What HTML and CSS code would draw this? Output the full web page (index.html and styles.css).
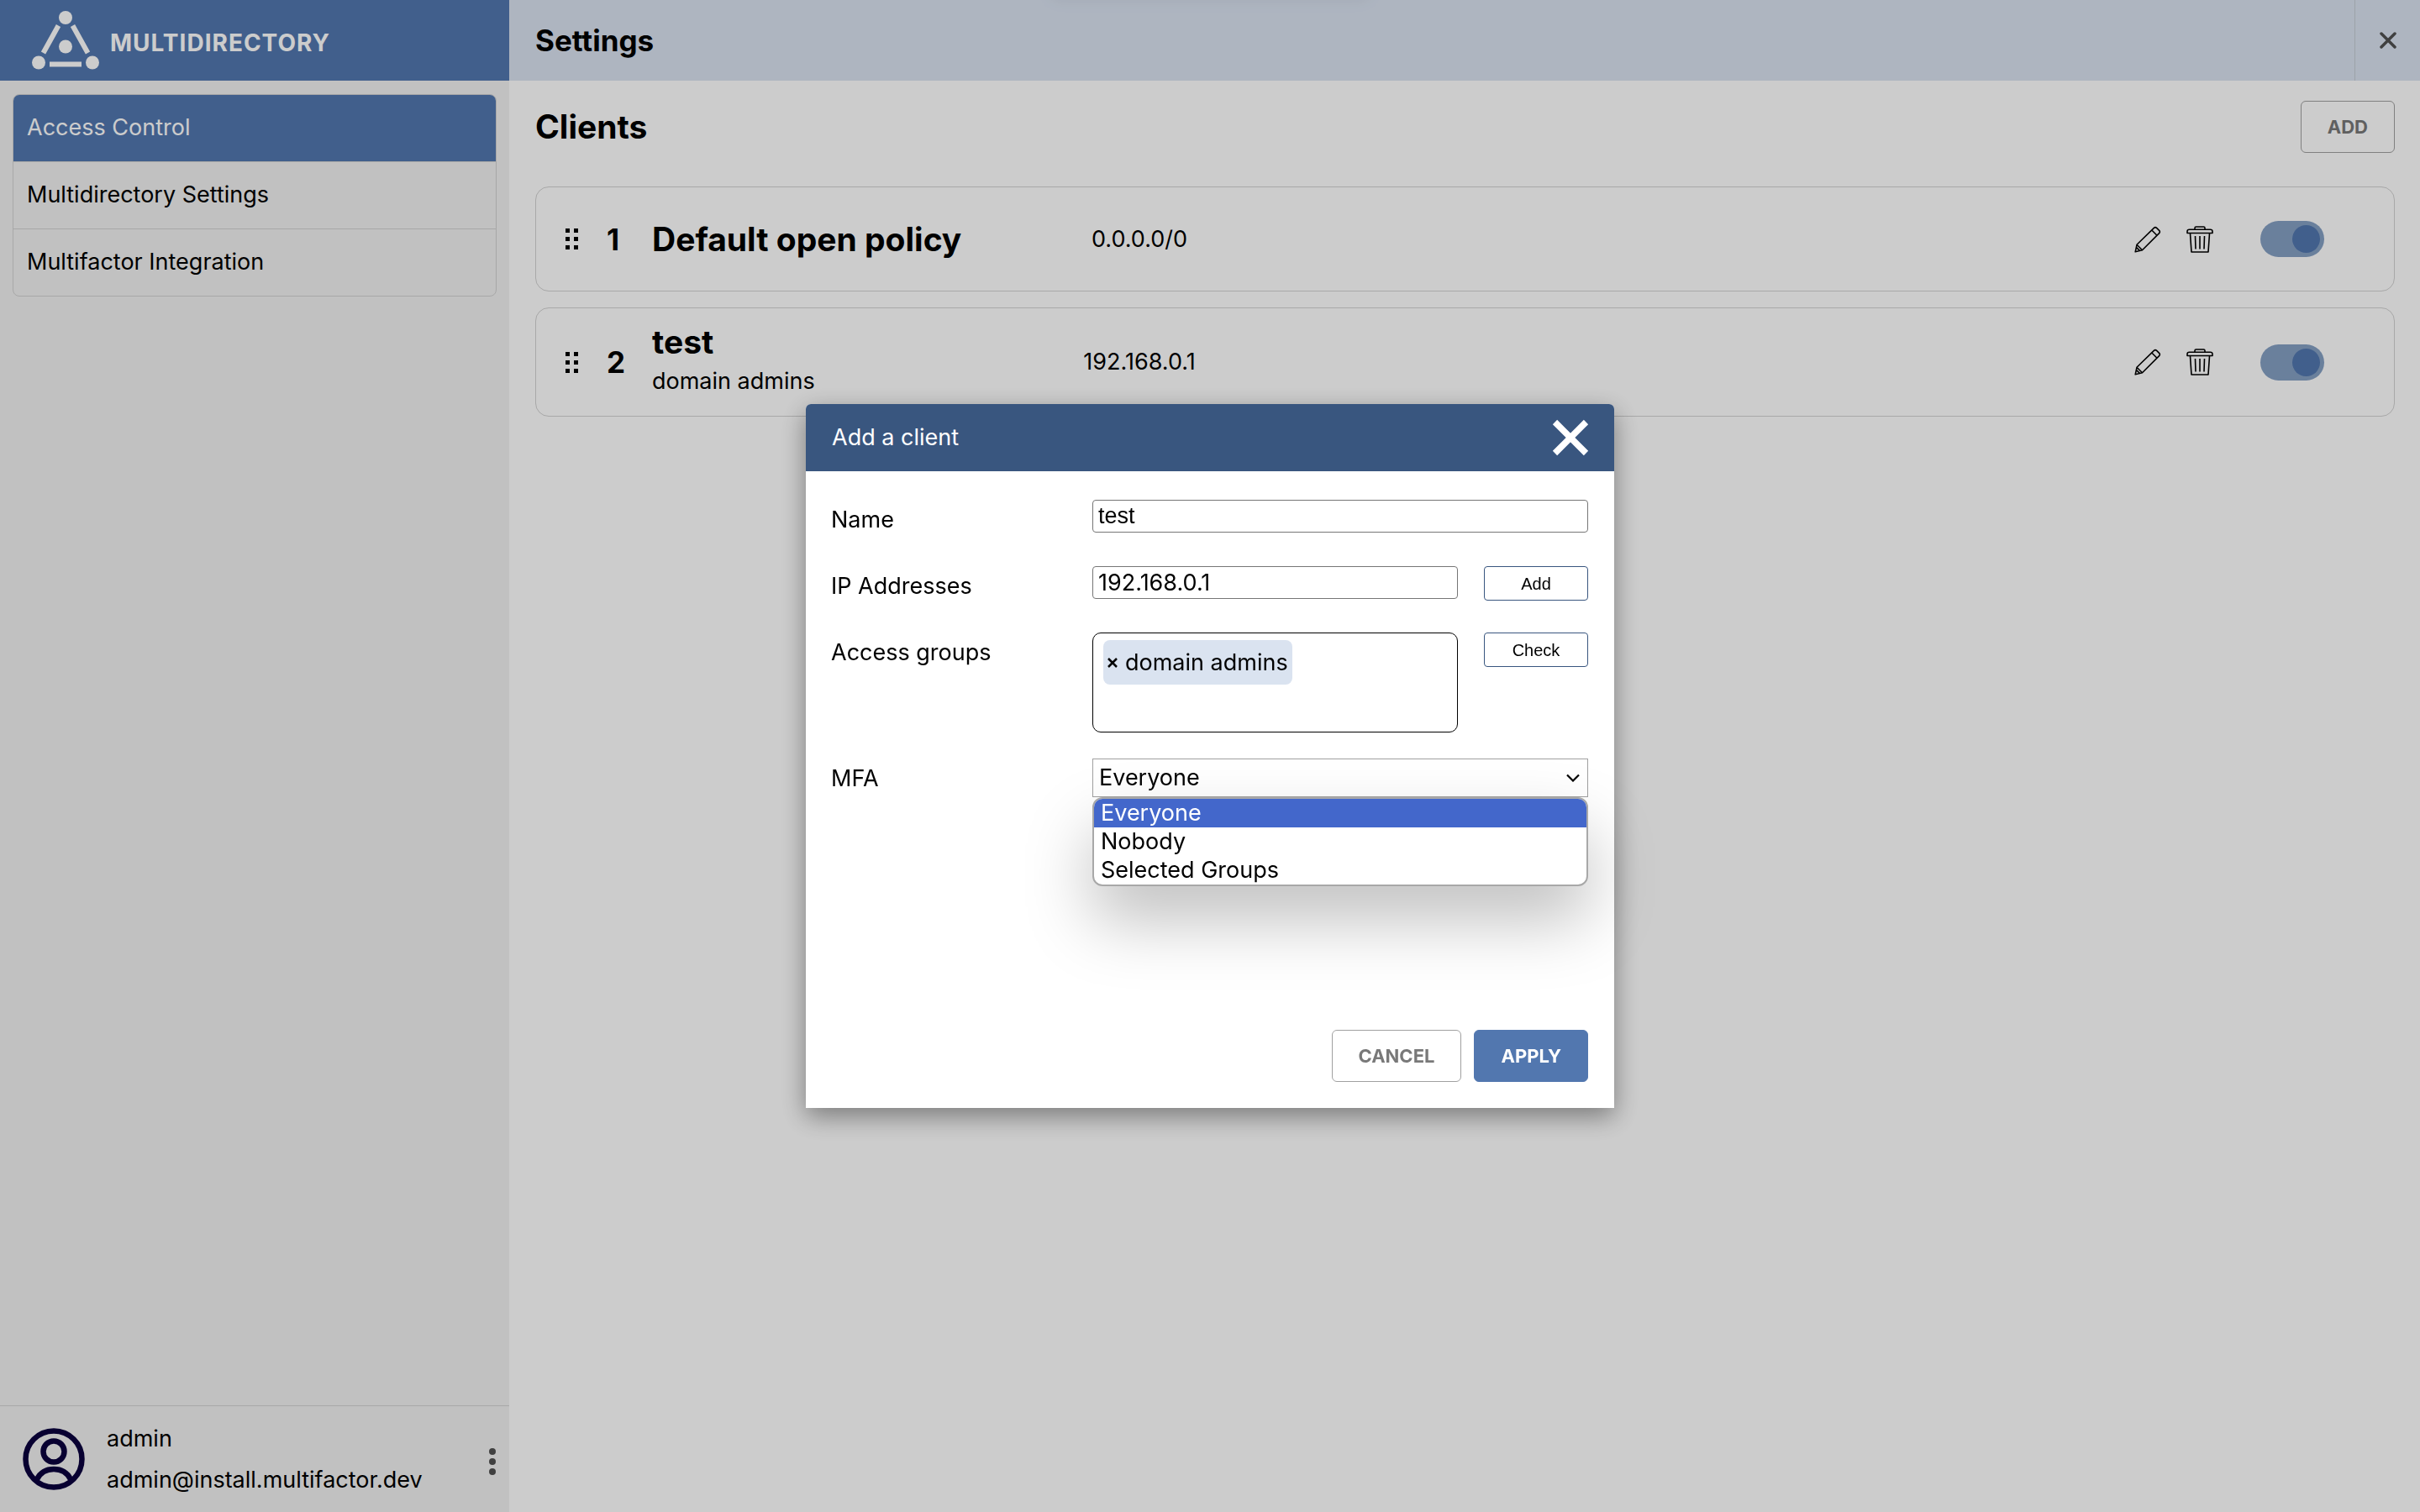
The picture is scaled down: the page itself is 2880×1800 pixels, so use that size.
FILE: index.html
```html
<!DOCTYPE html>
<html lang="en">
<head>
<meta charset="utf-8">
<title>Multidirectory – Settings</title>
<link rel="stylesheet" href="styles.css">
</head>
<body>
<svg class="sprite" aria-hidden="true">
  <symbol id="icon-grip" viewBox="0 0 15 25">
    <path d="M0 0h5v5H0zM10 0h5v5h-5zM0 10h5v5H0zM10 10h5v5h-5zM0 20h5v5H0zM10 20h5v5h-5z"/>
  </symbol>
  <symbol id="icon-pencil" viewBox="0 0 32 32">
    <path fill="none" stroke="currentColor" stroke-width="1.6" stroke-linejoin="round" d="M1.2 30.8 3 22.3 23.4 2.4Q25 .8 26.600 2.400L29.600 5.400Q31.200 7 29.600 8.600L9.500 28.700ZM3 22.300 9.500 28.700M20.800 5 27 11.200M2.600 25.600 6.400 29.400"/>
  </symbol>
  <symbol id="icon-trash" viewBox="0 0 32 32">
    <path fill="none" stroke="currentColor" stroke-width="1.600" stroke-linejoin="round" d="M4.500 9 6 31H26L27.500 9M1 8.500V6.500Q1 4.300 3.500 4.300H28.500Q31 4.300 31 6.500V8.500ZM10 4.300V2.500Q10 1 11.500 1H20.500Q22 1 22 2.500V4.300M10.500 12 11 27.500M16 12V27.500M21.500 12 21 27.500"/>
  </symbol>
</svg>
<div class="app">
  <aside class="sidebar">
    <header class="brand">
      <svg class="brand-mark" viewBox="0 0 82 72" aria-hidden="true">
        <g fill="#fff"><circle cx="41" cy="9" r="8"/><circle cx="41" cy="43.500" r="8"/><circle cx="9" cy="62.500" r="8"/><circle cx="73" cy="62.500" r="8"/></g>
        <path fill="none" stroke="#fff" stroke-width="6" d="M32.500 18.500 14.500 51M49.500 18.500 67.500 51M22 64.500H60"/>
      </svg>
      <span class="brand-name">MULTIDIRECTORY</span>
    </header>
    <nav class="nav">
      <a class="nav-item active" href="#access">Access Control</a>
      <a class="nav-item" href="#settings">Multidirectory Settings</a>
      <a class="nav-item" href="#multifactor">Multifactor Integration</a>
    </nav>
    <footer class="user">
      <svg class="avatar" viewBox="0 0 74 74" aria-hidden="true">
        <g fill="none" stroke="#0a003e" stroke-width="6.500"><circle cx="37" cy="37" r="33.500"/><circle cx="37" cy="28" r="12.500"/><path d="M17 61Q23 49 37 49T57 61"/></g>
      </svg>
      <div class="user-text">
        <span>admin</span>
        <span>admin@install.multifactor.dev</span>
      </div>
      <button class="icon-button user-menu" aria-label="User menu">
        <svg width="8" height="32" viewBox="0 0 8 32"><g fill="#505050"><circle cx="4" cy="4" r="4"/><circle cx="4" cy="16" r="4"/><circle cx="4" cy="28" r="4"/></g></svg>
      </button>
    </footer>
  </aside>
  <main class="main">
    <header class="topbar">
      <h1>Settings</h1>
      <button class="icon-button topbar-close" aria-label="Close settings">
        <svg width="20" height="20" viewBox="0 0 20 20"><path d="M2 2 18 18M18 2 2 18" stroke="#505050" stroke-width="3.500" stroke-linecap="round"/></svg>
      </button>
    </header>
    <section class="clients">
      <div class="clients-head">
        <h2>Clients</h2>
        <button class="button">ADD</button>
      </div>
      <article class="card">
        <svg class="grip"><use href="#icon-grip"/></svg>
        <span class="card-index">1</span>
        <div class="card-name"><h3>Default open policy</h3></div>
        <span class="card-ip">0.0.0.0/0</span>
        <div class="card-actions">
          <button class="icon-button" aria-label="Edit"><svg class="icon"><use href="#icon-pencil"/></svg></button>
          <button class="icon-button" aria-label="Delete"><svg class="icon"><use href="#icon-trash"/></svg></button>
          <input class="toggle" type="checkbox" aria-label="Enable Default open policy" checked>
        </div>
      </article>
      <article class="card">
        <svg class="grip"><use href="#icon-grip"/></svg>
        <span class="card-index">2</span>
        <div class="card-name"><h3>test</h3><span class="card-groups">domain admins</span></div>
        <span class="card-ip">192.168.0.1</span>
        <div class="card-actions">
          <button class="icon-button" aria-label="Edit"><svg class="icon"><use href="#icon-pencil"/></svg></button>
          <button class="icon-button" aria-label="Delete"><svg class="icon"><use href="#icon-trash"/></svg></button>
          <input class="toggle" type="checkbox" aria-label="Enable test" checked>
        </div>
      </article>
    </section>
  </main>
</div>
<div class="toast" aria-hidden="true"></div>
<div class="overlay">
  <div class="dialog" role="dialog" aria-labelledby="dialog-title">
    <header class="dialog-head">
      <span id="dialog-title">Add a client</span>
      <button class="icon-button" aria-label="Close dialog">
        <svg width="44" height="44" viewBox="0 0 44 44"><path d="M3.500 3.500 40.500 40.500M40.500 3.500 3.500 40.500" stroke="#fff" stroke-width="7.500"/></svg>
      </button>
    </header>
    <form class="dialog-body">
      <div class="field">
        <label for="name">Name</label>
        <input class="text wide" id="name" type="text" value="test">
      </div>
      <div class="field">
        <label for="ip">IP Addresses</label>
        <input class="text inter" id="ip" type="text" value="192.168.0.1">
        <button class="small-button" type="button">Add</button>
      </div>
      <div class="field">
        <span class="label" id="groups-label">Access groups</span>
        <div class="groups" role="group" aria-labelledby="groups-label">
          <span class="chip"><button class="icon-button" type="button" aria-label="Remove domain admins"><svg width="12" height="12" viewBox="0 0 12 12"><path d="M1 1 11 11M11 1 1 11" stroke="#000" stroke-width="2.500"/></svg></button>domain admins</span>
        </div>
        <button class="small-button" type="button">Check</button>
      </div>
      <div class="field">
        <label for="mfa">MFA</label>
        <div class="select-box wide">
          <select id="mfa"><option>Everyone</option><option>Nobody</option><option>Selected Groups</option></select>
          <svg class="chevron" width="16" height="10" viewBox="0 0 16 10"><path d="M1 1.500 8 8.500 15 1.500" fill="none" stroke="#000" stroke-width="2.200"/></svg>
          <ul class="options" role="listbox" aria-label="MFA">
            <li class="selected" role="option" aria-selected="true">Everyone</li>
            <li role="option">Nobody</li>
            <li role="option">Selected Groups</li>
          </ul>
        </div>
      </div>
      <div class="dialog-actions">
        <button class="button" type="button">CANCEL</button>
        <button class="button primary" type="submit">APPLY</button>
      </div>
    </form>
  </div>
</div>
</body>
</html>
```
FILE: styles.css
```css
* { box-sizing: border-box; }

body {
  margin: 0;
  font: 27px/34px Inter, "Liberation Sans", sans-serif;
  color: #000;
  background: #fff;
}

h1, h2, h3 { margin: 0; font-weight: 700; }

.sprite { display: none; }

.icon-button {
  display: flex;
  align-items: center;
  justify-content: center;
  padding: 0;
  border: 0;
  background: none;
  color: inherit;
}

.button {
  height: 62px;
  padding: 0 31px;
  border: 1px solid #a0a0a0;
  border-radius: 6px;
  background: #fff;
  color: #797979;
  font: 700 22px/30px Inter, "Liberation Sans", sans-serif;
}

.button.primary {
  border-color: #5277af;
  background: #5277af;
  color: #fff;
}

.app {
  display: grid;
  grid-template-columns: 606px 1fr;
  min-height: 100vh;
}

/* Sidebar */
.sidebar {
  display: flex;
  flex-direction: column;
  background: #f2f2f2;
}

.brand {
  display: flex;
  align-items: center;
  gap: 12px;
  height: 96px;
  padding-left: 37px;
  background: #5277af;
  color: #fff;
}

.brand-mark { width: 82px; height: 72px; }

.brand-name {
  padding-top: 5px;
  font-size: 28px;
  font-weight: 700;
  letter-spacing: 1px;
}

.nav {
  margin: 16px 15px;
  overflow: hidden;
  border: 1px solid #d2d2d2;
  border-radius: 8px;
}

.nav-item {
  display: block;
  padding: 22px 16px 23px;
  color: #000;
  text-decoration: none;
}

.nav-item + .nav-item { border-top: 1px solid #d2d2d2; }

.nav-item.active { background: #5277af; color: #fff; }

.user {
  display: flex;
  align-items: center;
  margin-top: auto;
  height: 127px;
  padding: 0 16px 0 27px;
  border-top: 1px solid #d2d2d2;
}

.avatar { width: 74px; height: 74px; }

.user-text {
  display: flex;
  flex-direction: column;
  gap: 15px;
  margin-left: 26px;
}

.user-menu { margin-left: auto; padding-top: 6px; }

/* Main area */
.topbar {
  display: flex;
  height: 96px;
  padding-left: 31px;
  background: #dae3f1;
}

.topbar h1 { font-size: 35px; line-height: 96px; }

.topbar-close {
  width: 78px;
  margin-left: auto;
  border-left: 1px solid #c4cbd4;
}

.clients {
  display: flex;
  flex-direction: column;
  gap: 19px;
  padding: 24px 30px 24px 31px;
}

.clients-head {
  display: flex;
  align-items: center;
  justify-content: space-between;
  margin-bottom: 21px;
}

.clients-head h2, .card h3 { font-size: 39px; line-height: 40px; }

.card {
  display: grid;
  grid-template-columns: 15px 52px 436px 360px 1fr;
  align-items: center;
  min-height: 125px;
  padding: 20px 83px 20px 35px;
  border: 1px solid #d2d2d2;
  border-radius: 16px;
}

.grip { width: 15px; height: 25px; }

.card-index {
  padding-left: 34px;
  font-size: 35px;
  font-weight: 700;
}

.card-name {
  display: flex;
  flex-direction: column;
  padding-left: 36px;
  white-space: nowrap;
  gap: 10px;
}

.card-groups { padding-bottom: 4px; }

.card-ip { text-align: center; }

.card-actions {
  display: flex;
  align-items: center;
  justify-content: flex-end;
  gap: 30px;
}

.icon { width: 32px; height: 32px; }

.toggle {
  appearance: none;
  width: 76px;
  height: 43px;
  margin: 0 0 0 26px;
  padding: 5px;
  border-radius: 22px;
  background: #85a0c4;
}

.toggle::before {
  content: "";
  display: block;
  width: 33px;
  height: 33px;
  margin-left: auto;
  border-radius: 50%;
  background: #5277af;
}

.toast {
  position: fixed;
  bottom: 100%;
  left: 50%;
  width: 380px;
  height: 60px;
  margin-left: -190px;
  box-shadow: 0 0 20px rgba(0, 0, 0, .06);
}

/* Dialog */
.overlay {
  position: fixed;
  inset: 0;
  display: flex;
  align-items: center;
  justify-content: center;
  background: rgba(0, 0, 0, .2);
}

.dialog {
  display: flex;
  flex-direction: column;
  width: 962px;
  min-height: 838px;
  border-radius: 6px 6px 0 0;
  background: #fff;
  box-shadow: 0 10px 30px rgba(0, 0, 0, .4);
}

.dialog-head {
  display: flex;
  align-items: center;
  justify-content: space-between;
  height: 80px;
  padding: 0 30px 0 31px;
  border-radius: 6px 6px 0 0;
  background: #39567f;
  color: #fff;
}

.dialog-body {
  flex: 1;
  display: flex;
  flex-direction: column;
  gap: 31px;
  padding: 34px 31px 31px 30px;
}

.field {
  display: grid;
  grid-template-columns: 280px 1fr 124px;
  align-items: start;
  column-gap: 31px;
  min-height: 48px;
}

.field label, .label { padding-top: 7px; }

.wide { grid-column: span 2; }

.text {
  width: 100%;
  height: 39px;
  padding: 2px 6px;
  border: 1px solid #767676;
  border-radius: 4px;
  background: #fff;
  color: #000;
  font: 27px/34px "Liberation Sans", sans-serif;
}

.text.inter { font-family: Inter, "Liberation Sans", sans-serif; }

.small-button {
  height: 41px;
  padding: 0;
  border: 1px solid #39567f;
  border-radius: 4px;
  background: #fff;
  color: #000;
  font: 20px/24px "Liberation Sans", sans-serif;
}

.groups {
  height: 119px;
  padding: 8px 12px;
  border: 1px solid #000;
  border-radius: 10px;
}

.chip {
  display: inline-flex;
  align-items: center;
  gap: 9px;
  height: 53px;
  padding: 0 5px;
  border-radius: 8px;
  background: #dae3f0;
}

.select-box { position: relative; display: grid; }

.select-box select, .chevron { grid-area: 1 / 1; }

.select-box select {
  appearance: none;
  height: 46px;
  padding: 0 7px;
  border: 1px solid #a0a0a0;
  border-radius: 0;
  background: #fff;
  color: #000;
  font: inherit;
}

.chevron {
  z-index: 1;
  align-self: center;
  justify-self: end;
  margin-right: 10px;
}

.options {
  position: absolute;
  top: 100%;
  left: 0;
  right: 0;
  margin: 0;
  padding: 0;
  overflow: hidden;
  list-style: none;
  border: 2px solid #a8a8a8;
  border-radius: 12px;
  background: #fff;
  box-shadow: 0 40px 80px rgba(0, 0, 0, .25);
}

.options li { padding: 0 8px; }

.options .selected { background: #4367cb; color: #fff; }

.dialog-actions {
  display: flex;
  justify-content: flex-end;
  gap: 15px;
  margin-top: auto;
}
```
